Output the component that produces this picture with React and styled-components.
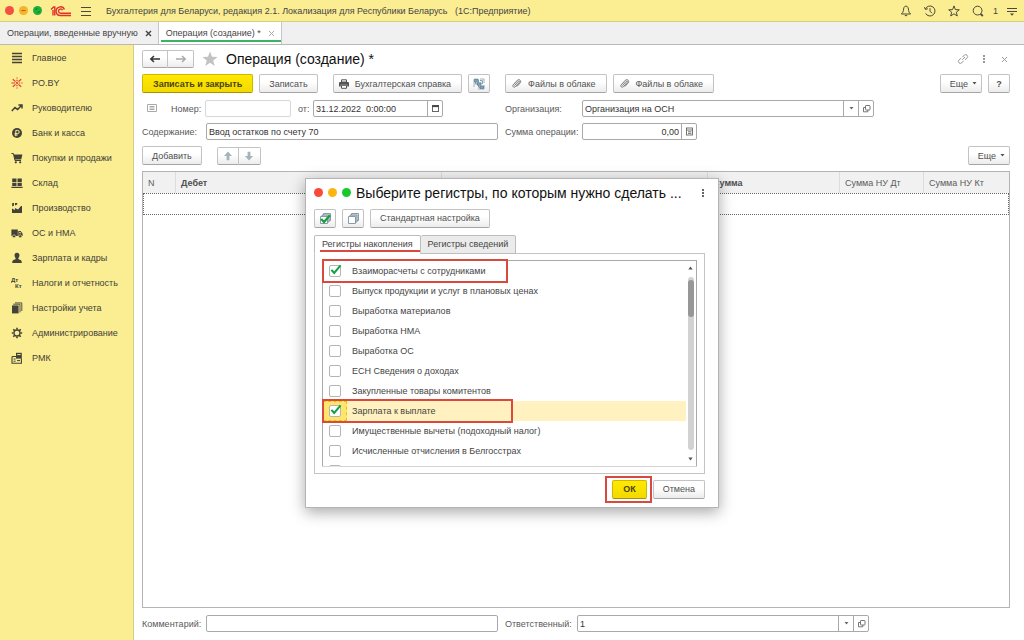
import React, { useState } from 'react';
import styled, { createGlobalStyle, css } from 'styled-components';

const GlobalStyle = createGlobalStyle`
  * {
    box-sizing: border-box;
  }

  body {
    margin: 0;
    background: #fff;
    color: #454545;
    font-family: 'Liberation Sans', Arial, sans-serif;
    font-size: 9px;
    line-height: 12px;
  }

  button, input {
    font: inherit;
    color: inherit;
  }

  svg {
    flex-shrink: 0;
  }
`;

const Page = styled.div`
  position: relative;
  display: flex;
  flex-direction: column;
  min-height: 100vh;
`;

/* ---------- window header ---------- */

const TitleBar = styled.header`
  display: flex;
  align-items: center;
  height: 22px;
  padding: 0 5px;
  background: #fbed92;
  border-bottom: 1px solid #d9cc80;
`;

const Dots = styled.div`
  display: flex;
  gap: 5px;
`;

const Dot = styled.span`
  display: flex;
  width: 9px;
  height: 9px;
  border-radius: 50%;
  background: ${props => props.$color};
`;

const AppTitle = styled.h1`
  flex: 1;
  margin: 0 0 0 13px;
  font-size: 9px;
  font-weight: 400;
  white-space: pre;
`;

const IconButton = styled.button`
  display: flex;
  align-items: center;
  justify-content: center;
  width: ${props => props.$width || 14}px;
  height: 14px;
  padding: 0;
  border: none;
  background: none;
  color: ${props => props.$color || '#4c4a3c'};
`;

const BarTools = styled.div`
  display: flex;
  align-items: center;
  gap: 10px;
`;

const TabBar = styled.nav`
  display: flex;
  height: 23px;
  background: #f0f0f0;
  border-bottom: 1px solid #b9b9b9;
`;

const WindowTab = styled.div`
  display: flex;
  align-items: center;
  gap: 7px;
  padding: 0 6px 0 7px;
  border-right: 1px solid #c4c4c4;
  ${props => props.$active && css`
    background: #fff;
    box-shadow: inset 2px 0 0 #fff, inset 0 -2px 0 #fff, inset 0 -4px 0 #3db166;
  `}
`;

const TabLink = styled.a`
  color: inherit;
  text-decoration: none;
`;

const CloseButton = styled.button`
  display: flex;
  padding: 0;
  border: none;
  background: none;
  color: ${props => (props.$muted ? '#a9a9a9' : '#444')};
`;

/* ---------- layout ---------- */

const Body = styled.div`
  display: flex;
  flex: 1;
`;

const Sidebar = styled.nav`
  width: 134px;
  flex-shrink: 0;
  background: #fbed92;
  border-right: 1px solid #d9cc80;
`;

const MenuLink = styled.a`
  display: flex;
  align-items: center;
  gap: 9px;
  height: 25px;
  padding-left: 11px;
  color: #42413a;
  text-decoration: none;
  white-space: nowrap;
`;

const Main = styled.main`
  display: flex;
  flex: 1;
  flex-direction: column;
  min-width: 0;
  padding: 5px 14px 8px 8px;
`;

const Row = styled.div`
  display: flex;
  align-items: center;
  gap: ${props => props.$gap || 6}px;
  margin-bottom: ${props => props.$below || 0}px;
`;

const ToolRow = styled(Row)`
  margin: 6px 0;
`;

const Spacer = styled.div`
  width: ${props => (props.$width ? `${props.$width}px` : 'auto')};
  flex: ${props => (props.$width ? 'none' : 1)};
`;

const Heading = styled.h2`
  flex: 1;
  margin: 0;
  color: #111;
  font-size: 14px;
  font-weight: 400;
  line-height: 18px;
  white-space: nowrap;
`;

const buttonPadding = {
  text: '0 9px',
  primary: '0 10px',
  icon: '0 3px',
  iconText: '0 10px 0 5px',
  menu: '0 4px 0 9px',
};

const Button = styled.button`
  display: flex;
  align-items: center;
  justify-content: center;
  gap: ${props => (props.$kind === 'menu' ? 4 : 6)}px;
  height: 19px;
  min-width: 22px;
  padding: ${props => buttonPadding[props.$kind || 'text']};
  border: 1px solid #c3c3c3;
  border-bottom-color: #a5a5a5;
  border-radius: 2px;
  background: linear-gradient(#fff 40%, #ececec);
  color: #505050;
  white-space: nowrap;
  ${props => props.$kind === 'primary' && css`
    border-color: #cdb700;
    border-bottom-color: #a39300;
    background: linear-gradient(#ffe900, #f3d900);
    color: #4a4414;
    font-weight: 700;
  `}
`;

const ButtonPair = styled.div`
  display: flex;

  ${Button} {
    width: ${props => props.$width}px;
    height: 18px;
  }

  ${Button}:first-child {
    border-radius: 2px 0 0 2px;
  }

  ${Button}:last-child {
    border-left: none;
    border-radius: 0 2px 2px 0;
  }
`;

const FormGrid = styled.div`
  display: grid;
  grid-template-columns: ${props => props.$columns};
  gap: 6px 7px;
`;

const Field = styled.div`
  display: flex;
  align-items: center;
`;

const Label = styled.label`
  flex-shrink: 0;
  width: ${props => props.$width}px;
  color: #5a5a5a;
  white-space: nowrap;
`;

const InputBox = styled.div`
  display: flex;
  flex: ${props => (props.$width ? 'none' : 1)};
  width: ${props => (props.$width ? `${props.$width}px` : 'auto')};
  min-width: 0;
  height: 17px;
  border: 1px solid ${props => (props.$pale ? '#d8d8d8' : '#a9a9a9')};
  border-radius: 2px;
  background: #fff;
`;

const TextInput = styled.input`
  flex: 1;
  min-width: 0;
  padding: 0 2px;
  border: none;
  outline: none;
  background: none;
  color: #333;
  text-align: ${props => props.$align || 'left'};
`;

const InputButton = styled.button`
  display: flex;
  align-items: center;
  justify-content: center;
  width: 15px;
  padding: 0;
  border: none;
  border-left: 1px solid #a9a9a9;
  background: none;
  color: #666;
`;

/* ---------- table ---------- */

const TableBox = styled.div`
  flex: 1;
  margin-bottom: 7px;
  border: 1px solid #b4b4b4;
`;

const Table = styled.table`
  width: 100%;
  border-collapse: separate;
  border-spacing: 0;
  table-layout: fixed;

  th {
    height: 21px;
    padding: 0 5px;
    border-right: 1px solid #dcdcdc;
    background: #f1f1f1;
    color: #5c5c5c;
    font-weight: 400;
    text-align: left;
  }

  th.strong {
    font-weight: 700;
    color: #505050;
  }

  th:last-child {
    border-right: none;
  }

  td {
    height: 22px;
    padding: 0;
    border: 1px dotted #666;
  }
`;

/* ---------- dialog ---------- */

const Overlay = styled.div`
  position: absolute;
  inset: 45px 0 0 0;
  display: flex;
  align-items: center;
  justify-content: center;
`;

const Dialog = styled.section`
  display: flex;
  flex-direction: column;
  width: 414px;
  padding: 5px 13px 4px 8px;
  border: 1px solid #b5b5b5;
  background: #fff;
  box-shadow: 0 4px 14px rgba(0, 0, 0, 0.35);
`;

const DialogFooter = styled.div`
  display: flex;
  align-items: center;
  justify-content: flex-end;
  gap: 1px;
  margin-top: 2px;
`;

const TabList = styled.div`
  display: flex;
  margin-bottom: -1px;
`;

const DialogTab = styled.button`
  position: relative;
  height: 19px;
  padding: 0 7px;
  border: 1px solid #bdbdbd;
  border-bottom-color: ${props => (props.$active ? '#fff' : '#bdbdbd')};
  border-radius: 2px 2px 0 0;
  background: ${props => (props.$active ? '#fff' : '#ebebeb')};
  color: #444;
  white-space: nowrap;

  & + & {
    border-left: none;
  }
`;

const Underline = styled.span`
  position: absolute;
  left: 5px;
  right: 0;
  bottom: 1px;
  height: 2px;
  background: #d9493e;
`;

const Panel = styled.div`
  padding: 6px 7px;
  border: 1px solid #c4c4c4;
`;

const ListBox = styled.div`
  display: flex;
  height: 207px;
  border: 1px solid #a9a9a9;
  clip-path: inset(-3px -3px 0 -3px);
`;

const List = styled.ul`
  flex: 1;
  height: 205px;
  margin: 0;
  padding: 0;
  list-style: none;
`;

const Item = styled.li`
  position: relative;
  background: ${props => (props.$selected ? '#fff2c0' : 'none')};
`;

const ItemLabel = styled.label`
  display: flex;
  align-items: center;
  height: 20px;
  padding-right: 8px;
  white-space: nowrap;
`;

const CheckCell = styled.span`
  position: relative;
  display: flex;
  align-items: center;
  width: 24px;
  height: 20px;
  margin-right: 5px;
  padding-left: 6px;
  background: ${props => (props.$selected ? '#ffe56b' : 'none')};
  outline: ${props => (props.$selected ? '1px dashed #e3c400' : 'none')};
  outline-offset: -1px;

  svg {
    position: absolute;
    left: 6px;
    top: 3px;
    pointer-events: none;
  }
`;

const Checkbox = styled.input`
  appearance: none;
  width: 12px;
  height: 12px;
  margin: 0;
  border: 1px solid #b4b4b4;
  border-radius: 2px;
  background: #fff;
`;

const Mark = styled.span`
  position: absolute;
  left: -1px;
  top: -2px;
  width: ${props => props.$width}px;
  height: 24px;
  border: 2px solid #d9493e;
  pointer-events: none;
`;

const Scrollbar = styled.div`
  display: flex;
  flex-direction: column;
  align-items: center;
  width: 10px;
  padding: 5px 1px 5px 0;
  color: #555;
`;

const Track = styled.div`
  flex: 1;
  width: 6px;
  margin: 7px 0;
  padding-top: 3px;
  border-radius: 3px;
  background: #d2d2d2;
`;

const Thumb = styled.div`
  height: 37px;
  border-radius: 3px;
  background: #979797;
`;

const OkFrame = styled.div`
  padding: 2px 3px 2px 5px;
  border: 2px solid #d9493e;
`;

/* ---------- icons ---------- */

const Svg = ({ size = 12, w, h, children, ...rest }) => (
  <svg
    width={w || size}
    height={h || size}
    viewBox={`0 0 ${w || size} ${h || size}`}
    fill="none"
    stroke="currentColor"
    strokeWidth="1"
    aria-hidden="true"
    {...rest}
  >
    {children}
  </svg>
);

const Logo = () => (
  <Svg w={22} h={12} stroke="#e0302a" strokeWidth="1.4">
    <path d="M1 4.4 L3.6 2 H4.8 V10.6 M3 5 V10.6" />
    <path d="M14.4 4.6 A4.3 4.3 0 1 0 10.6 10.5 H21" />
    <path d="M12.5 5.2 A2.1 2.1 0 1 0 10.6 8.2 H21" />
  </Svg>
);

const Caret = () => (
  <Svg w={5} h={3} stroke="none" fill="currentColor">
    <path d="M0.5 0 H4.5 L2.5 2.6 Z" />
  </Svg>
);

const CaretUp = () => (
  <Svg w={5} h={4} stroke="none" fill="currentColor">
    <path d="M0.3 3.5 H4.7 L2.5 0.5 Z" />
  </Svg>
);

const CaretDown = () => (
  <Svg w={5} h={4} stroke="none" fill="currentColor">
    <path d="M0.3 0.5 H4.7 L2.5 3.5 Z" />
  </Svg>
);

const Cross = ({ bold }) => (
  <Svg size={7} strokeWidth={bold ? 1.4 : 1}>
    <path d="M1 1 L6 6 M6 1 L1 6" />
  </Svg>
);

const Kebab = () => (
  <Svg w={4} h={10} stroke="none" fill="currentColor">
    <rect x="1" y="1" width="2" height="2" />
    <rect x="1" y="4" width="2" height="2" />
    <rect x="1" y="7" width="2" height="2" />
  </Svg>
);

const OpenIcon = () => (
  <Svg size={9} strokeWidth="0.9">
    <rect x="3.5" y="1.5" width="4.5" height="4.5" rx="0.6" />
    <path d="M3.5 3.5 H1.5 V7.8 H5.8 V6" />
  </Svg>
);

const CalendarIcon = () => (
  <Svg size={9}>
    <rect x="1.5" y="1.5" width="6" height="6" />
    <path d="M1 2.2 H8" strokeWidth="1.8" stroke="#444" />
  </Svg>
);

const CalcIcon = () => (
  <Svg size={9} strokeWidth="0.9">
    <rect x="1.5" y="1" width="6" height="7" />
    <path d="M1.5 3 H7.5 M3 4.8 H6.4 M3 6.4 H6.4" />
  </Svg>
);

const Clip = () => (
  <Svg size={11} stroke="#666" strokeWidth="0.9">
    <path d="M3.4 7.6 L7.2 3.4 C8 2.6 9 3.6 8.2 4.4 L4.3 8.7 C3 10 0.9 8.4 2.2 6.8 L6.4 2.2 C8 0.6 10.9 2.8 9.2 4.9 L5.8 8.6" />
  </Svg>
);

const Printer = () => (
  <Svg size={10} stroke="none" fill="#555">
    <path d="M2.5 0.8 H7.5 V3 H2.5 Z" fill="#fff" stroke="#555" />
    <path d="M1 3 H9 Q10 3 10 4 V7.4 H8.2 V5.8 H1.8 V7.4 H0 V4 Q0 3 1 3 Z" />
    <path d="M2.5 6.3 H7.5 V9.3 H2.5 Z" fill="#fff" stroke="#555" />
  </Svg>
);

const StructureIcon = () => (
  <Svg size={12} strokeWidth="0.8">
    <path d="M1 1 H5 M1 1 V9 M7 1 H11 V5 M11 7 V11 H5" stroke="#8aa0ad" />
    <path d="M1.6 1.6 H5.4 V4 H1.6 Z M4.4 4.8 H8 V7.2 H4.4 Z M7 8 H10.6 V10.4 H7 Z" fill="#86aabd" stroke="#587c90" />
    <path d="M2.6 4 V6 H4.4 M5.6 7.2 V9.2 H7 M7 2.6 H9.4 V6" stroke="#587c90" />
  </Svg>
);

const Cubes = ({ checked }) => (
  <Svg size={13} stroke="#7d929e" strokeWidth="0.9">
    <path d="M4.5 1.5 H11.5 V8.5 H4.5 Z" fill="#d5e2e9" />
    <path d="M3 3 H10 V10 H3 Z" fill="#c5d6df" />
    <path d="M1.5 4.5 H8.5 V11.5 H1.5 Z" fill="#fff" />
    {checked && <path d="M2.2 7 L5 10 L11 3.2" stroke="#16a13c" strokeWidth="2.3" />}
  </Svg>
);

const Tick = () => (
  <Svg size={13} stroke="#12a045" strokeWidth="2">
    <path d="M2.4 5.8 L5.2 9 L11.6 1.4" />
  </Svg>
);

const Star = () => (
  <Svg size={16} stroke="none" fill="#c2c2c2">
    <path d="M8 0.4 L10 5.7 L15.6 5.9 L11.2 9.4 L12.8 15 L8 11.8 L3.2 15 L4.8 9.4 L0.4 5.9 L6 5.7 Z" />
  </Svg>
);

const Arrow = ({ dir, color }) => {
  const angle = { left: 0, up: 90, right: 180, down: 270 }[dir];
  const block = dir === 'up' || dir === 'down';
  return (
    <Svg size={12} color={color} strokeWidth="1.5">
      <g transform={`rotate(${angle} 6 6)`}>
        {block ? (
          <path d="M1.6 6 L6 2 V4.6 H10.2 V7.4 H6 V10 Z" fill="currentColor" stroke="none" />
        ) : (
          <path d="M1.4 6 H11 M5 3 L1.8 6 L5 9" />
        )}
      </g>
    </Svg>
  );
};

const menuIcons = {
  main: <path d="M1 1.5 H11 M1 4.5 H11 M1 7.5 H11 M1 10.5 H11" strokeWidth="1.4" />,
  poby: (
    <g stroke="#e4392c" strokeWidth="1.2">
      <circle cx="6" cy="6" r="1.1" fill="#e4392c" stroke="none" />
      <path d="M6 4.2 V2.8 M6 1.6 V0.4 M6 7.8 V9.2 M6 10.4 V11.6 M4.2 6 H0.4 M7.8 6 H9.2 M10.4 6 H11.6" />
      <path d="M4.6 4.6 L1.8 2.2 M7.4 4.6 L10.2 2.2 M4.6 7.4 L1.8 9.8 M7.4 7.4 L10.2 9.8" />
    </g>
  ),
  chart: <path d="M0.8 9 L4 5.6 L6.6 7.6 L10.4 3.6 M7.4 3 H11 V6.6" strokeWidth="1.5" />,
  bank: (
    <>
      <circle cx="6" cy="6" r="5" fill="currentColor" stroke="none" />
      <path d="M4.8 9.2 V3.4 H6.6 A1.6 1.6 0 0 1 6.6 6.6 H3.6 M3.6 8 H6.6" stroke="#fbed92" />
    </>
  ),
  cart: (
    <>
      <path d="M0.4 1.5 H2.4 L4 8.5 H10" />
      <path d="M2.6 2.6 H11.4 L10.2 7.4 H3.8 Z" fill="currentColor" stroke="none" />
      <circle cx="4.8" cy="10.3" r="1.1" fill="currentColor" stroke="none" />
      <circle cx="9.2" cy="10.3" r="1.1" fill="currentColor" stroke="none" />
    </>
  ),
  store: (
    <path
      d="M1.2 1.5 H5.5 V5.2 H1.2 Z M6.5 1.5 H10.8 V5.2 H6.5 Z M1.2 6 H5.5 V9 H1.2 Z M6.5 6 H10.8 V9 H6.5 Z M0.4 9.8 H11.6 V11 H0.4 Z"
      fill="currentColor"
      stroke="none"
    />
  ),
  factory: (
    <path
      d="M1 11 V6.4 L4 8 V6 L7 7.6 L10 4 H11 V11 Z M1.2 1 H3 V3.6 L1.2 4.6 Z M4 1 H6.2 V2.6 L4 3.6 Z"
      fill="currentColor"
      stroke="none"
    />
  ),
  truck: (
    <>
      <path d="M0.4 2.5 H6.8 V9 H0.4 Z M7.3 4 H9.6 L11.6 6.4 V9 H7.3 Z" fill="currentColor" stroke="none" />
      <circle cx="3" cy="9.3" r="1.5" fill="currentColor" stroke="#fbed92" strokeWidth="0.6" />
      <circle cx="9.2" cy="9.3" r="1.5" fill="currentColor" stroke="#fbed92" strokeWidth="0.6" />
      <path d="M8.3 5 H9.3 L10.3 6.3 H8.3 Z" fill="#fbed92" stroke="none" />
    </>
  ),
  person: (
    <path
      d="M6 0.8 C8 0.8 8.6 2.2 8.4 3.8 C8.2 5.2 7.4 6.2 7.2 7 L10 8.2 Q10.8 8.6 10.8 11 H1.2 Q1.2 8.6 2 8.2 L4.8 7 C4.6 6.2 3.8 5.2 3.6 3.8 C3.4 2.2 4 0.8 6 0.8 Z"
      fill="currentColor"
      stroke="none"
    />
  ),
  taxes: (
    <g fill="currentColor" stroke="none" fontSize="6" fontWeight="700">
      <text x="0" y="5">Дт</text>
      <text x="4" y="11">Кт</text>
    </g>
  ),
  books: (
    <>
      <path d="M1 3.4 H7.6 V11.4 H1 Z" fill="currentColor" stroke="none" />
      <path d="M2.2 2.2 H9 V10.4 M4 0.9 H10.8 V9" strokeWidth="0.9" />
    </>
  ),
  gear: (
    <>
      <circle cx="6" cy="6" r="3" strokeWidth="1.3" />
      <path
        d="M6 0.8 V2.6 M6 9.4 V11.2 M0.8 6 H2.6 M9.4 6 H11.2 M2.3 2.3 L3.6 3.6 M8.4 8.4 L9.7 9.7 M9.7 2.3 L8.4 3.6 M3.6 8.4 L2.3 9.7"
        strokeWidth="1.6"
      />
    </>
  ),
  pos: (
    <>
      <path d="M1 4.5 H5 M1 4.5 V11.2 H10.4 V6.4" strokeWidth="1.1" />
      <path d="M5 0.8 H10.8 V6.6 H5 Z" fill="currentColor" stroke="none" />
      <path d="M6.2 2.6 H9.6" stroke="#fbed92" />
      <path d="M2.6 7 H4.6 M2.6 9.2 H4.6 M6 8.6 H9" />
    </>
  ),
};

/* ---------- data ---------- */

const menu = [
  { icon: 'main', title: 'Главное' },
  { icon: 'poby', title: 'PO.BY' },
  { icon: 'chart', title: 'Руководителю' },
  { icon: 'bank', title: 'Банк и касса' },
  { icon: 'cart', title: 'Покупки и продажи' },
  { icon: 'store', title: 'Склад' },
  { icon: 'factory', title: 'Производство' },
  { icon: 'truck', title: 'ОС и НМА' },
  { icon: 'person', title: 'Зарплата и кадры' },
  { icon: 'taxes', title: 'Налоги и отчетность' },
  { icon: 'books', title: 'Настройки учета' },
  { icon: 'gear', title: 'Администрирование' },
  { icon: 'pos', title: 'РМК' },
];

const initialRegisters = [
  { name: 'Взаиморасчеты с сотрудниками', checked: true, mark: 186 },
  { name: 'Выпуск продукции и услуг в плановых ценах' },
  { name: 'Выработка материалов' },
  { name: 'Выработка НМА' },
  { name: 'Выработка ОС' },
  { name: 'ЕСН Сведения о доходах' },
  { name: 'Закупленные товары комитентов' },
  { name: 'Зарплата к выплате', checked: true, selected: true, mark: 191 },
  { name: 'Имущественные вычеты (подоходный налог)' },
  { name: 'Исчисленные отчисления в Белгосстрах' },
  { name: '' },
];

const RegistersDialog = () => {
  const [registers, setRegisters] = useState(initialRegisters);

  const toggle = (index) => {
    setRegisters(registers.map((r, i) => (i === index ? { ...r, checked: !r.checked } : r)));
  };

  const setAll = (checked) => {
    setRegisters(registers.map((r) => ({ ...r, checked })));
  };

  return (
    <Dialog role="dialog" aria-labelledby="dialog-title">
      <Row $gap={5} $below={7}>
        <Dots>
          <Dot $color="#fa4b38" />
          <Dot $color="#fcb60f" />
          <Dot $color="#17c92d" />
        </Dots>
        <Heading id="dialog-title">Выберите регистры, по которым нужно сделать ...</Heading>
        <IconButton $width={4} $color="#666" aria-label="Меню"><Kebab /></IconButton>
      </Row>
      <Row $below={7}>
        <Button $kind="icon" aria-label="Установить все" onClick={() => setAll(true)}><Cubes checked /></Button>
        <Button $kind="icon" aria-label="Снять все" onClick={() => setAll(false)}><Cubes /></Button>
        <Button>Стандартная настройка</Button>
      </Row>
      <TabList role="tablist">
        <DialogTab role="tab" aria-selected="true" $active>
          Регистры накопления
          <Underline />
        </DialogTab>
        <DialogTab role="tab" aria-selected="false">Регистры сведений</DialogTab>
      </TabList>
      <Panel role="tabpanel">
        <ListBox>
          <List>
            {registers.map((r, i) => (
              <Item key={i} $selected={r.selected}>
                <ItemLabel>
                  <CheckCell $selected={r.selected}>
                    <Checkbox type="checkbox" checked={!!r.checked} onChange={() => toggle(i)} />
                    {r.checked && <Tick />}
                  </CheckCell>
                  {r.name}
                </ItemLabel>
                {r.mark && <Mark $width={r.mark} />}
              </Item>
            ))}
          </List>
          <Scrollbar aria-hidden="true">
            <CaretUp />
            <Track><Thumb /></Track>
            <CaretDown />
          </Scrollbar>
        </ListBox>
      </Panel>
      <DialogFooter>
        <OkFrame><Button $kind="primary">ОК</Button></OkFrame>
        <Button>Отмена</Button>
      </DialogFooter>
    </Dialog>
  );
};

const App = () => {
  return (
    <>
      <GlobalStyle />
      <Page>
        <TitleBar>
          <Dots>
            <Dot $color="#f4503f" />
            <Dot $color="#f5b22a">
              <Svg size={9} stroke="#a8690c"><path d="M2.5 4.5 H6.5" /></Svg>
            </Dot>
            <Dot $color="#1fae3c">
              <Svg size={9} stroke="none" fill="#0b6a20"><path d="M2.6 4 V2.6 H5 Z M6.4 5 V6.4 H4 Z" /></Svg>
            </Dot>
          </Dots>
          <Spacer $width={8} />
          <Logo />
          <Spacer $width={7} />
          <IconButton aria-label="Главное меню">
            <Svg size={12}><path d="M1 2.5 H11 M1 6.5 H11 M1 10.5 H11" /></Svg>
          </IconButton>
          <AppTitle>Бухгалтерия для Беларуси, редакция 2.1. Локализация для Республики Беларусь   (1С:Предприятие)</AppTitle>
          <BarTools>
            <IconButton aria-label="Уведомления">
              <Svg size={12}>
                <path d="M6 1 C3.8 1.4 3.6 3.4 3.4 5.6 Q3.2 7.4 1.4 9 H10.6 Q8.8 7.4 8.6 5.6 C8.4 3.4 8.2 1.4 6 1 Z M4.8 10.6 H7.2" />
              </Svg>
            </IconButton>
            <IconButton aria-label="История">
              <Svg size={12}>
                <path d="M1.4 4 A5 5 0 1 1 1.6 8.4 M0.4 2.2 L1.4 4.4 L3.8 3.8 M6 3.2 V6.2 L8 8.2" />
              </Svg>
            </IconButton>
            <IconButton aria-label="Избранное">
              <Svg size={12}>
                <path d="M6 0.9 L7.4 4.6 L11.3 4.8 L8.3 7.2 L9.3 11 L6 8.8 L2.7 11 L3.7 7.2 L0.7 4.8 L4.6 4.6 Z" />
              </Svg>
            </IconButton>
            <IconButton aria-label="Поиск">
              <Svg size={12}>
                <circle cx="5.6" cy="5.6" r="4.4" />
                <path d="M8.6 8.8 L10.8 11" strokeWidth="1.8" />
              </Svg>
            </IconButton>
          </BarTools>
          <Spacer $width={8} />
          <span>1</span>
          <Spacer $width={7} />
          <IconButton aria-label="Настройки">
            <Svg size={12}>
              <path d="M1 3.5 H11 M1 6.5 H11" />
              <path d="M4 8.5 H8 L6 10.8 Z" fill="currentColor" stroke="none" />
            </Svg>
          </IconButton>
        </TitleBar>

        <TabBar>
          <WindowTab>
            <TabLink href="#list">Операции, введенные вручную</TabLink>
            <CloseButton aria-label="Закрыть"><Cross bold /></CloseButton>
          </WindowTab>
          <WindowTab $active>
            <TabLink href="#new">Операция (создание) *</TabLink>
            <CloseButton $muted aria-label="Закрыть"><Cross /></CloseButton>
          </WindowTab>
        </TabBar>

        <Body>
          <Sidebar>
            {menu.map((item) => (
              <MenuLink key={item.icon} href={`#${item.icon}`}>
                <Svg size={12}>{menuIcons[item.icon]}</Svg>
                {item.title}
              </MenuLink>
            ))}
          </Sidebar>

          <Main>
            <Row $gap={8} $below={6}>
              <ButtonPair $width={26}>
                <Button $kind="icon" aria-label="Назад"><Arrow dir="left" color="#333" /></Button>
                <Button $kind="icon" aria-label="Вперед"><Arrow dir="right" color="#aaa" /></Button>
              </ButtonPair>
              <Star />
              <Heading>Операция (создание) *</Heading>
              <IconButton $color="#9a9a9a" aria-label="Ссылка">
                <Svg size={12}>
                  <path d="M5.2 6.8 L8 4 M5.4 4.2 L7.4 2 A2 2 0 0 1 10.2 4.8 L8 6.8 M6.6 7.8 L4.6 10 A2 2 0 0 1 1.8 7.2 L4 5.2" />
                </Svg>
              </IconButton>
              <IconButton $color="#999" $width={12} aria-label="Меню"><Kebab /></IconButton>
              <IconButton $color="#999" $width={12} aria-label="Закрыть"><Cross /></IconButton>
            </Row>

            <Row $below={7}>
              <Button $kind="primary">Записать и закрыть</Button>
              <Button>Записать</Button>
              <Spacer $width={3} />
              <Button $kind="iconText"><Printer />Бухгалтерская справка</Button>
              <Button $kind="icon" aria-label="Структура"><StructureIcon /></Button>
              <Spacer $width={3} />
              <Button $kind="iconText"><Clip />Файлы в облаке</Button>
              <Button $kind="iconText"><Clip />Файлы в облаке</Button>
              <Spacer />
              <Button $kind="menu">Еще <Caret /></Button>
              <Button $kind="icon"><b>?</b></Button>
            </Row>

            <FormGrid $columns="356fr 369fr 129fr">
              <Field>
                <Svg w={29} h={12} stroke="#aaa">
                  <path d="M5.5 1.5 H14.5 V8.5 H5.5 Z M7.5 3.5 H12.5 M7.5 5 H12.5 M7.5 6.5 H12.5" />
                </Svg>
                <Label $width={34} htmlFor="number">Номер:</Label>
                <InputBox $pale $width={86}><TextInput id="number" /></InputBox>
                <Spacer $width={7} />
                <Label $width={15} htmlFor="date">от:</Label>
                <InputBox $width={130}>
                  <TextInput id="date" defaultValue="31.12.2022  0:00:00" />
                  <InputButton aria-label="Календарь"><CalendarIcon /></InputButton>
                </InputBox>
              </Field>
              <Field>
                <Label $width={77} htmlFor="org">Организация:</Label>
                <InputBox>
                  <TextInput id="org" defaultValue="Организация на ОСН" />
                  <InputButton aria-label="Выбрать"><Caret /></InputButton>
                  <InputButton aria-label="Открыть"><OpenIcon /></InputButton>
                </InputBox>
              </Field>
              <span />
              <Field>
                <Label $width={64} htmlFor="content">Содержание:</Label>
                <InputBox><TextInput id="content" defaultValue="Ввод остатков по счету 70" /></InputBox>
              </Field>
              <Field>
                <Label $width={77} htmlFor="sum">Сумма операции:</Label>
                <InputBox $width={115}>
                  <TextInput id="sum" $align="right" defaultValue="0,00" />
                  <InputButton aria-label="Калькулятор"><CalcIcon /></InputButton>
                </InputBox>
              </Field>
            </FormGrid>

            <ToolRow>
              <Button>Добавить</Button>
              <Spacer $width={3} />
              <ButtonPair $width={22}>
                <Button $kind="icon" aria-label="Вверх"><Arrow dir="up" color="#a4b4bd" /></Button>
                <Button $kind="icon" aria-label="Вниз"><Arrow dir="down" color="#a4b4bd" /></Button>
              </ButtonPair>
              <Spacer />
              <Button $kind="menu">Еще <Caret /></Button>
            </ToolRow>

            <TableBox>
              <Table>
                <colgroup>
                  <col style={{ width: 33 }} />
                  <col />
                  <col />
                  <col style={{ width: 132 }} />
                  <col style={{ width: 84 }} />
                  <col style={{ width: 85 }} />
                </colgroup>
                <thead>
                  <tr>
                    <th>N</th>
                    <th className="strong">Дебет</th>
                    <th className="strong">Кредит</th>
                    <th className="strong">Сумма</th>
                    <th>Сумма НУ Дт</th>
                    <th>Сумма НУ Кт</th>
                  </tr>
                </thead>
                <tbody>
                  <tr>
                    <td colSpan={6} />
                  </tr>
                </tbody>
              </Table>
            </TableBox>

            <FormGrid $columns="356fr 364fr 134fr">
              <Field>
                <Label $width={64} htmlFor="comment">Комментарий:</Label>
                <InputBox><TextInput id="comment" /></InputBox>
              </Field>
              <Field>
                <Label $width={72} htmlFor="person">Ответственный:</Label>
                <InputBox>
                  <TextInput id="person" defaultValue="1" />
                  <InputButton aria-label="Выбрать"><Caret /></InputButton>
                  <InputButton aria-label="Открыть"><OpenIcon /></InputButton>
                </InputBox>
              </Field>
            </FormGrid>
          </Main>
        </Body>

        <Overlay>
          <RegistersDialog />
        </Overlay>
      </Page>
    </>
  );
};

export default App;
